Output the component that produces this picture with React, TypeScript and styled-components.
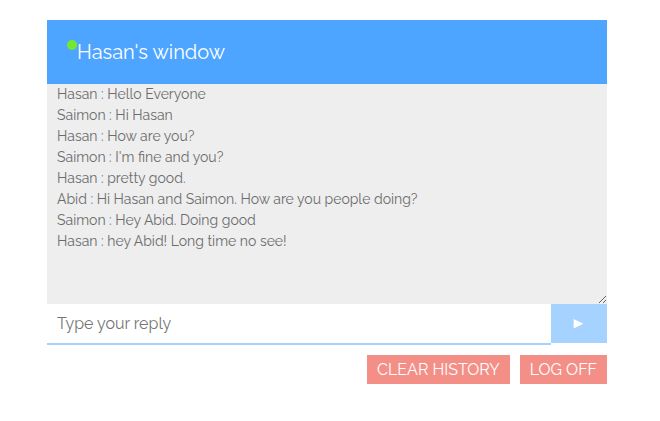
import React, { useState } from "react";
import styled, { createGlobalStyle } from "styled-components";

const GlobalStyle = createGlobalStyle`
  *, *::before, *::after { box-sizing: border-box; }
  body {
    margin: 0;
    background: #fff;
    font-family: Raleway, Lato, "Open Sans", sans-serif;
    font-size: 16px;
    font-weight: 400;
  }
  button, input, textarea { font: inherit; margin: 0; }
`;

const ChatWindow = styled.main`
  margin: 20px 53px 20px 47px;
`;

const Header = styled.header`
  display: flex;
  align-items: flex-start;
  padding: 20px;
  background: #4da5ff;
  color: #fff;
`;

const StatusDot = styled.span`
  width: 10px;
  height: 10px;
  border-radius: 50%;
  background: #74e82f;
`;

const Title = styled.h1`
  margin: 0;
  font-size: 20px;
  line-height: 24px;
  font-weight: inherit;
`;

const History = styled.textarea`
  display: block;
  width: 100%;
  height: 220px;
  padding: 0 10px;
  border: 0;
  outline: 0;
  background: #eee;
  color: #6c6c6c;
  font-size: 14px;
  line-height: 21px;
`;

const ReplyForm = styled.form`
  display: flex;
  align-items: flex-start;
`;

const ReplyInput = styled.input`
  flex: 1;
  min-width: 0;
  height: 41px;
  padding: 0 10px;
  border: 0;
  border-bottom: 2px solid #a6d2ff;
  outline: 0;
  background: #fff;
  color: #555;
  &::placeholder { color: #757575; opacity: 1; }
`;

const SendButton = styled.button`
  display: flex;
  align-items: center;
  justify-content: center;
  width: 56px;
  height: 39px;
  padding: 0;
  border: 0;
  background: #a6d2ff;
  color: #fff;
  cursor: pointer;
`;

const Actions = styled.div`
  display: flex;
  justify-content: flex-end;
  gap: 10px;
  margin-top: 10px;
`;

const ActionButton = styled.button`
  height: 29px;
  padding: 0 10px;
  border: 0;
  background: #f48f87;
  color: #fff;
  text-transform: uppercase;
  white-space: nowrap;
  cursor: pointer;
`;

const initialMessages = [
  "Hasan : Hello Everyone",
  "Saimon : Hi Hasan",
  "Hasan : How are you?",
  "Saimon : I'm fine and you?",
  "Hasan : pretty good.",
  "Abid : Hi Hasan and Saimon. How are you people doing?",
  "Saimon : Hey Abid. Doing good",
  "Hasan : hey Abid! Long time no see!",
];

export default function App() {
  const [messages, setMessages] = useState(initialMessages);
  const [reply, setReply] = useState("");

  const send = (event: React.FormEvent) => {
    event.preventDefault();
    if (!reply.trim()) return;
    setMessages([...messages, `Hasan : ${reply}`]);
    setReply("");
  };

  return (
    <>
      <GlobalStyle />
      <ChatWindow>
        <Header>
          <StatusDot />
          <Title>Hasan's window</Title>
        </Header>
        <History
          aria-label="Chat history"
          readOnly
          spellCheck={false}
          value={messages.join("\n")}
        />
        <ReplyForm onSubmit={send}>
          <ReplyInput
            type="text"
            aria-label="Type your reply"
            placeholder="Type your reply"
            value={reply}
            onChange={(event) => setReply(event.target.value)}
          />
          <SendButton type="submit" aria-label="Send">
            <svg width="12" height="11" viewBox="0 0 12 11" aria-hidden="true">
              <path d="M0.6 1V10.4L10.4 5.7Z" fill="currentColor" />
            </svg>
          </SendButton>
        </ReplyForm>
        <Actions>
          <ActionButton type="button" onClick={() => setMessages([])}>
            Clear history
          </ActionButton>
          <ActionButton type="button">Log off</ActionButton>
        </Actions>
      </ChatWindow>
    </>
  );
}
